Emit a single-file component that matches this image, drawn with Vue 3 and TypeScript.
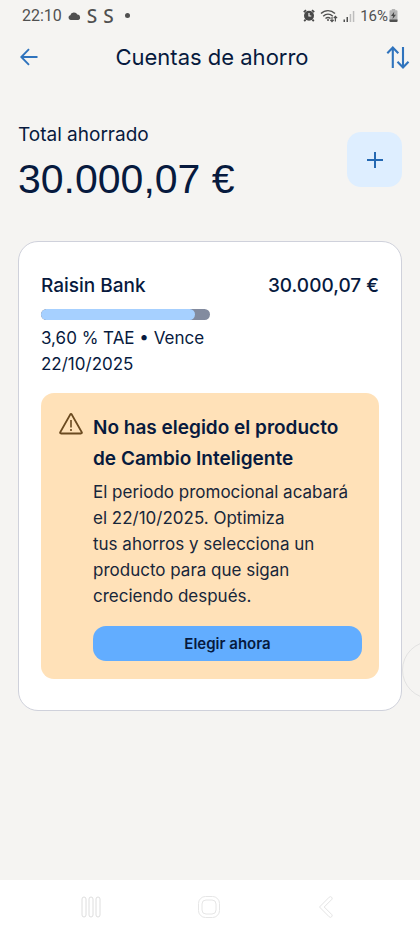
<script setup lang="ts">
interface Account {
  bank: string
  balance: string
  rate: string
  due: string
  progress: number
}

const total = '30.000,07 €'

const account: Account = {
  bank: 'Raisin Bank',
  balance: '30.000,07 €',
  rate: '3,60 % TAE',
  due: '22/10/2025',
  progress: 91,
}
</script>

<template>
  <div class="screen">
    <div class="status">
      <div class="status-left">
        <span>22:10</span>
        <svg width="13" height="8" viewBox="0 0 13 8" aria-hidden="true">
          <path d="M2.6 8A2.4 2.4 0 0 1 2.3 3.3 3.8 3.8 0 0 1 9.4 2.6 2.8 2.8 0 0 1 10.4 8Z" fill="#505050" />
        </svg>
        <span class="app-mark">S</span>
        <span class="app-mark">S</span>
        <span class="dot"></span>
      </div>
      <div class="status-right">
        <svg width="12" height="13" viewBox="0 0 12 13" aria-hidden="true">
          <circle cx="6" cy="6.7" r="5" fill="#484848" />
          <path d="M.8 3.2 3 1.2M11.2 3.2 9 1.2M2.6 10.6 1.2 12.2M9.4 10.6l1.4 1.6" stroke="#484848" stroke-width="1.8" />
          <path d="M6 4v3h2.3" fill="none" stroke="#f5f4f2" stroke-width="1.2" />
        </svg>
        <svg width="18" height="14" viewBox="0 0 18 14" fill="none" stroke="#505050" aria-hidden="true">
          <path d="M1 4.6C5 .6 11 .6 15 4.6M3.2 7.2c2.8-2.8 6.8-2.8 9.6 0M5.5 9.6c1.6-1.5 3.4-1.5 5 0" stroke-width="1.4" />
          <circle cx="8" cy="11" r="1" fill="#505050" stroke="none" />
          <path d="M12 8v4.6m-1.7-1.7 1.7 1.7 1.7-1.7M15.4 12.6V7.4m-1.7 1.7 1.7-1.7 1.7 1.7" stroke-width="1.2" />
        </svg>
        <svg width="12" height="12" viewBox="0 0 12 12" aria-hidden="true">
          <path d="M.5 9.5H2V12H.5zM3.5 7H5v5H3.5z" fill="#505050" />
          <path d="M6.7 4h1.5v8H6.7zM9.8 1h1.5v11H9.8z" fill="#bdbdbd" />
        </svg>
        <div class="battery">
          <span>16%</span>
          <svg width="9" height="13" viewBox="0 0 9 13" aria-hidden="true">
            <path d="M2.8 0h3.4v1.2H7.5a1 1 0 0 1 1 1V12a1 1 0 0 1-1 1h-6a1 1 0 0 1-1-1V2.2a1 1 0 0 1 1-1h1.3z" fill="#b5b5b5" />
            <path d="M.5 10.5h8V12a1 1 0 0 1-1 1h-6a1 1 0 0 1-1-1z" fill="#505050" />
            <path d="M5.2 2.8 2 7h2l-.4 3L7 5.8H4.9z" fill="#484848" />
          </svg>
        </div>
      </div>
    </div>

    <header class="topbar">
      <button type="button" aria-label="Volver">
        <svg width="18" height="18" viewBox="0 0 18 18" fill="none" stroke="#2f73bd" stroke-width="1.9">
          <path d="M17.5 9H1.5M9 1.2 1.3 9 9 16.8" />
        </svg>
      </button>
      <h1>Cuentas de ahorro</h1>
      <button type="button" aria-label="Transferir">
        <svg width="24" height="23" viewBox="0 0 24 23" fill="none" stroke="#2f73bd" stroke-width="2.1">
          <path d="M6.8 22V1.8M1.3 7.2l5.500-5.600 5.500 5.600M17 1v20.200M11.500 15.800l5.500 5.600 5.500-5.600" />
        </svg>
      </button>
    </header>

    <main class="content">
      <section class="summary">
        <div>
          <p class="summary-label">Total ahorrado</p>
          <p class="summary-total">{{ total }}</p>
        </div>
        <button class="add" type="button" aria-label="Añadir">
          <svg width="18" height="18" viewBox="0 0 18 18" stroke="#2468b2" stroke-width="2">
            <path d="M1 9h16M9 1v16" />
          </svg>
        </button>
      </section>

      <article class="card">
        <div class="card-head">
          <h2>{{ account.bank }}</h2>
          <span class="balance">{{ account.balance }}</span>
        </div>
        <div class="account-info">
          <div class="track">
            <div class="fill" :style="{ width: account.progress + '%' }"></div>
          </div>
          <p class="terms">{{ account.rate }} • Vence {{ account.due }}</p>
        </div>

        <div class="notice">
          <svg class="warning" width="24" height="22" viewBox="0 0 24 22" fill="none" stroke="#6b4a20" stroke-width="1.9" aria-hidden="true">
            <path d="M11.2 1.6q.8-1.200 1.600 0L22.700 19.100q.6 1.400-.8 1.400H2.100q-1.400 0-.8-1.400Z" stroke-linejoin="round" />
            <path d="M12 7v7.500M12 16v2" stroke-width="1.6" />
          </svg>
          <div class="notice-body">
            <h3>No has elegido el producto de Cambio Inteligente</h3>
            <p>El periodo promocional acabará el {{ account.due }}. Optimiza tus&nbsp;ahorros y selecciona un producto para que sigan creciendo después.</p>
            <button class="choose" type="button">Elegir ahora</button>
          </div>
        </div>
      </article>
      <div class="edge-handle"></div>
    </main>

    <nav class="system-nav">
      <button type="button" aria-label="Recientes">
        <svg width="22" height="22" viewBox="0 0 22 22" fill="none" stroke="#dedede">
          <rect x="2" y="1" width="4" height="20" rx="2" />
          <rect x="9" y="1" width="4" height="20" rx="2" />
          <rect x="16" y="1" width="4" height="20" rx="2" />
        </svg>
      </button>
      <button type="button" aria-label="Inicio">
        <svg width="22" height="22" viewBox="0 0 22 22" fill="none" stroke="#e6e6e6">
          <rect x=".5" y=".5" width="21" height="21" rx="7" />
          <rect x="4" y="4" width="14" height="14" rx="4" />
        </svg>
      </button>
      <button type="button" aria-label="Atrás">
        <svg width="22" height="22" viewBox="0 0 22 22" fill="none" stroke="#e4e4e4">
          <path d="M13.2 1.2a1.7 1.7 0 0 1 2.5 2.3L8.2 11l7.5 7.5a1.7 1.7 0 0 1-2.5 2.3L3.5 11Z" />
        </svg>
      </button>
    </nav>
  </div>
</template>

<style>
body {
  margin: 0;
  background: #f5f4f2;
}
</style>

<style scoped>
.screen {
  display: flex;
  flex-direction: column;
  min-height: 100vh;
  background: #f5f4f2;
  color: #071a3e;
  font-family: Inter, "Liberation Sans", sans-serif;
  overflow: hidden;
}

h1,
h2,
h3,
p {
  margin: 0;
}

button {
  display: flex;
  align-items: center;
  justify-content: center;
  padding: 0;
  border: 0;
  background: none;
  font-family: inherit;
  color: inherit;
}

.status {
  display: flex;
  justify-content: space-between;
  align-items: center;
  height: 31px;
  padding: 0 22px;
  font-family: Roboto, sans-serif;
  font-size: 16px;
  color: #505050;
}

.status-left,
.status-right,
.battery {
  display: flex;
  align-items: center;
}

.status-left {
  gap: 6px;
}

.status-right {
  gap: 5px;
}

.battery {
  gap: 1px;
  font-size: 15px;
}

.app-mark {
  font-family: "Noto Sans", sans-serif;
  font-size: 19px;
  font-weight: 500;
  line-height: 24px;
}

.dot {
  width: 5px;
  height: 5px;
  margin-left: 5px;
  border-radius: 50%;
  background: #505050;
}

.topbar {
  display: flex;
  justify-content: space-between;
  align-items: center;
  height: 52px;
  padding: 0 10px 0 20px;
}

h1 {
  font-size: 22px;
  font-weight: 400;
}

.content {
  position: relative;
  flex: 1;
  padding: 38px 18px 24px;
}

.summary {
  display: flex;
  justify-content: space-between;
  align-items: flex-start;
}

.summary-label {
  font-size: 19px;
  line-height: 28px;
}

.summary-total {
  font-family: "Liberation Sans", Arial, sans-serif;
  font-size: 41px;
  line-height: 60px;
}

.add {
  width: 55px;
  height: 55px;
  margin-top: 11px;
  border-radius: 14px;
  background: #deeeff;
}

.card {
  margin-top: 32px;
  padding: 30px 22px 31px;
  border: 1px solid #cfd1db;
  border-radius: 20px;
  background: #fff;
}

.card-head {
  display: flex;
  justify-content: space-between;
  line-height: 28px;
}

h2,
.balance {
  font-size: 19px;
  font-weight: 500;
}

.account-info {
  width: 50%;
  margin-top: 9px;
}

.track {
  height: 11px;
  border-radius: 6px;
  background: #828b9f;
  overflow: hidden;
}

.fill {
  height: 100%;
  border-radius: 6px;
  background: #a6d0ff;
}

.terms {
  margin-top: 5px;
  font-size: 17px;
  line-height: 26px;
}

.notice {
  display: flex;
  gap: 10px;
  margin-top: 16px;
  padding: 19px 17px 18px 18px;
  border-radius: 13px;
  background: #ffe1b8;
}

.warning {
  flex: none;
  margin-top: 1px;
}

.notice-body {
  flex: 1;
}

h3 {
  font-size: 19px;
  font-weight: 600;
  line-height: 31px;
}

.notice-body p {
  margin-top: 5px;
  color: #17263a;
  font-size: 17px;
  line-height: 26px;
}

.choose {
  width: 100%;
  height: 35px;
  margin-top: 17px;
  border-radius: 13px;
  background: #62adff;
  font-size: 15px;
  font-weight: 600;
}

.edge-handle {
  position: absolute;
  top: 558px;
  right: -40px;
  width: 56px;
  height: 56px;
  border: 1px solid #e2e2e2;
  border-radius: 50%;
}

.system-nav {
  display: flex;
  justify-content: space-between;
  align-items: center;
  height: 53px;
  padding: 0 82px 0 80px;
  background: #fff;
}
</style>
